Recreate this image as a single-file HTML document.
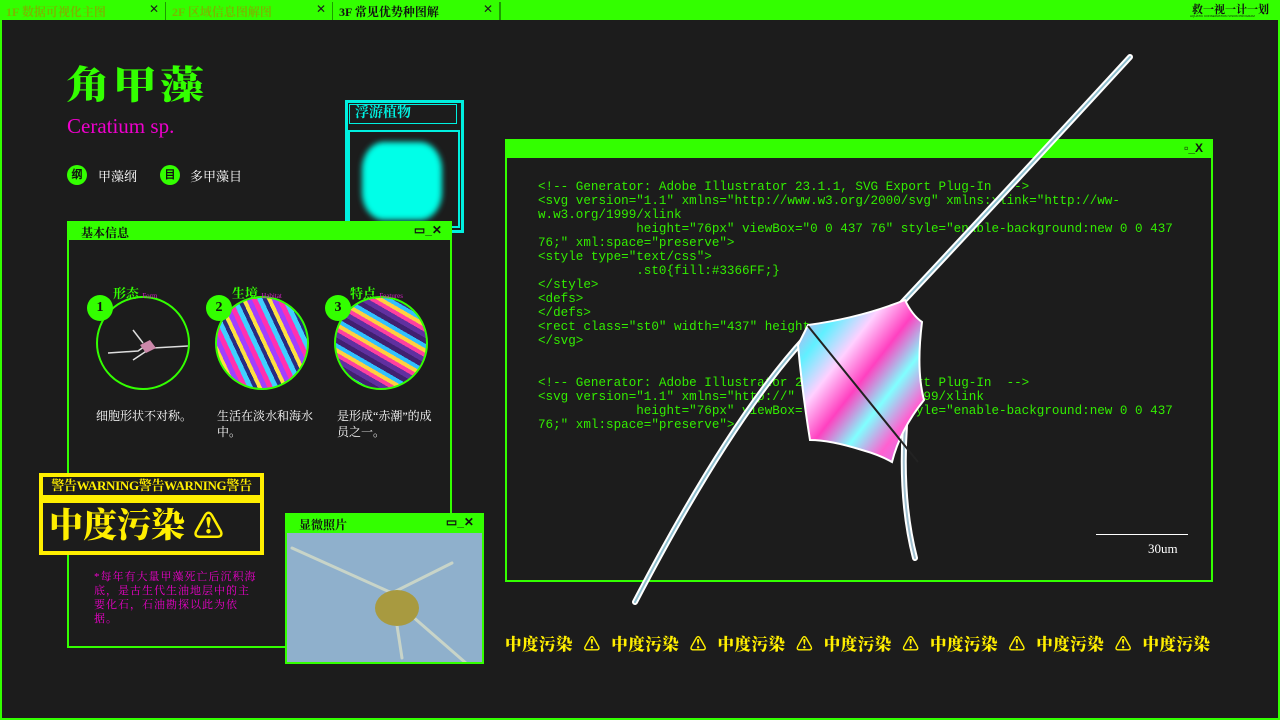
<!DOCTYPE html>
<html><head><meta charset="utf-8"><style>
*{margin:0;padding:0;box-sizing:border-box}
body{width:1280px;height:720px;background:#1c1c1c;position:relative;overflow:hidden;font-family:"Liberation Serif","Noto Serif CJK SC",serif;color:#fff}
.abs{position:absolute}
.frame{left:0;top:0;width:1280px;height:720px;border:2px solid #33ff00}
.top{left:0;top:0;width:1280px;height:20px;background:#33ff00}
.tab{top:0;height:20px;font-size:12px;font-weight:bold;padding:3px 0 0 6px;border-right:1px solid #1c9c00;color:#7ab800}
.tab span{position:absolute;right:6px;top:2px;color:#1c1c1c;font-family:"Liberation Sans",sans-serif;font-weight:normal}
.win{border:2px solid #33ff00}
.bar{position:absolute;left:0;top:0;right:0;height:17px;background:#33ff00;color:#111;font-size:12px;font-weight:bold;padding:1px 0 0 12px;font-family:"Liberation Serif","Noto Serif CJK SC",serif}
.ctl{position:absolute;right:8px;top:0;font-family:"Liberation Sans",sans-serif;font-size:12px;color:#111;font-weight:bold}
.code{font-family:"Liberation Mono","DejaVu Sans Mono",monospace;color:#33ee00;font-size:12.6px;line-height:14px;white-space:pre}
.circ{border:2px solid #33ff00;border-radius:50%;width:94px;height:94px;overflow:hidden}
.num{width:26px;height:26px;border-radius:50%;background:#33ff00;color:#111;font-weight:bold;font-size:14px;text-align:center;line-height:26px;font-family:"Liberation Serif",serif}
.lab{font-size:13px;font-weight:bold;color:#33ff00}
.lab i{font-size:7px;color:#d020c0;font-style:normal;font-weight:normal}
.desc{font-size:12px;line-height:16px;color:#fff}
</style></head><body>
<div class="abs top"></div>
<div class="abs tab" style="left:0;width:166px">1F 数据可视化主图<span>✕</span></div>
<div class="abs tab" style="left:166px;width:167px">2F 区域信息图解图<span>✕</span></div>
<div class="abs tab" style="left:333px;width:167px;color:#111">3F 常见优势种图解<span>✕</span></div>
<div class="abs" style="left:500px;top:0;width:1px;height:20px;background:#1c9c00"></div>
<div class="abs" style="left:1192px;top:1px;font-size:11px;color:#111;font-weight:bold;letter-spacing:0">救一视一计一划</div>
<div class="abs" style="left:1190px;top:14px;font-size:3px;color:#111;font-family:'Liberation Sans',sans-serif">AQUATIC CONSERVATION VISION PROGRAM</div>
<div class="abs frame"></div>

<div class="abs" style="left:66px;top:66px;font-size:44px;font-weight:900;color:#33ff00;letter-spacing:3px;line-height:46px;transform:scaleY(.88);transform-origin:0 0">角甲藻</div>
<div class="abs" style="left:67px;top:114px;font-size:21px;color:#ee00cc">Ceratium sp.</div>
<div class="abs num" style="left:67px;top:165px;width:20px;height:20px;line-height:20px;font-size:11px">纲</div>
<div class="abs" style="left:98px;top:166px;font-size:13px">甲藻纲</div>
<div class="abs num" style="left:160px;top:165px;width:20px;height:20px;line-height:20px;font-size:11px">目</div>
<div class="abs" style="left:190px;top:166px;font-size:13px">多甲藻目</div>

<!-- cyan box -->
<div class="abs" style="left:345px;top:100px;width:119px;height:133px;border:3px solid #00f0e0"></div>
<div class="abs" style="left:349px;top:104px;width:108px;height:20px;border:1px solid #00f0e0;background:#1c1c1c;color:#00f0e0;font-weight:bold;font-size:14px;padding:0 0 0 5px;line-height:18px">浮游植物</div>
<div class="abs" style="left:348px;top:130px;width:112px;height:98px;border:2px solid #00f0e0"></div>
<div class="abs" style="left:362px;top:142px;width:80px;height:78px;background:#00ffe8;border-radius:22px/28px;filter:blur(3px)"></div>

<!-- info panel -->
<div class="abs win" style="left:67px;top:221px;width:385px;height:427px"><div class="bar">基本信息<div class="ctl">▭_✕</div></div></div>
<div class="abs circ" style="left:96px;top:296px"><svg width="94" height="94"><path d="M10 55 L40 53 L50 46 L55 50 L90 48" stroke="#ddd" stroke-width="1.5" fill="none"/><path d="M35 32 L45 45 M35 62 L50 52" stroke="#ddd" stroke-width="1.5" fill="none"/><path d="M42 47 L52 42 L58 50 L48 55Z" fill="#c8a"/></svg></div>
<div class="abs circ" style="left:215px;top:296px;background:repeating-linear-gradient(65deg,#ff30b0 0 5px,#40d0ff 5px 10px,#2a2a80 10px 14px,#ffe040 14px 18px,#a040ff 18px 23px)"></div>
<div class="abs circ" style="left:334px;top:296px;background:repeating-linear-gradient(30deg,#6030a0 0 5px,#ff40a0 5px 9px,#ffd040 9px 13px,#30c0ff 13px 17px,#402070 17px 22px)"></div>
<div class="abs num" style="left:87px;top:295px">1</div>
<div class="abs num" style="left:206px;top:295px">2</div>
<div class="abs num" style="left:325px;top:295px">3</div>
<div class="abs lab" style="left:113px;top:283px">形态 <i>Form</i></div>
<div class="abs lab" style="left:232px;top:283px">生境 <i>Habitat</i></div>
<div class="abs lab" style="left:350px;top:283px">特点 <i>Features</i></div>
<div class="abs desc" style="left:96px;top:408px">细胞形状不对称。</div>
<div class="abs desc" style="left:217px;top:408px;width:100px">生活在淡水和海水中。</div>
<div class="abs desc" style="left:337px;top:408px;width:100px">是形成“赤潮”的成员之一。</div>
<div class="abs" style="left:94px;top:570px;width:165px;font-size:11px;line-height:14px;color:#ee00cc;letter-spacing:1px">*每年有大量甲藻死亡后沉积海底，是古生代生油地层中的主要化石，石油勘探以此为依据。</div>

<!-- warning -->
<div class="abs" style="left:39px;top:473px;width:225px;height:82px;background:#ffee00"></div>
<div class="abs" style="left:43px;top:477px;width:217px;height:18px;background:#1c1c1c;color:#ffee00;font-size:13px;font-weight:bold;text-align:center;line-height:18px;white-space:nowrap;letter-spacing:-0.3px">警告WARNING警告WARNING警告</div>
<div class="abs" style="left:43px;top:503px;width:217px;height:48px;background:#1c1c1c;color:#ffee00;font-size:34px;font-weight:900;line-height:48px;padding-left:6px;white-space:nowrap">中度污染 <span style="font-size:30px">⚠</span></div>

<!-- micro photo -->
<div class="abs win" style="left:285px;top:513px;width:199px;height:151px;background:#8fb0cc;overflow:hidden">
<svg class="abs" style="left:0;top:18px" width="199" height="131"><g stroke="#c8d4c8" stroke-width="3" fill="none" stroke-linecap="round"><path d="M5 15 L105 60 L165 30"/><path d="M105 60 L115 125"/><path d="M110 70 L180 131"/></g><ellipse cx="110" cy="75" rx="22" ry="18" fill="#a89a40"/></svg>
<div class="bar" style="height:18px">显微照片<div class="ctl">▭_✕</div></div>
</div>

<!-- code panel -->
<div class="abs win" style="left:505px;top:139px;width:708px;height:443px"><div class="bar"><div class="ctl">▫_X</div></div></div>
<div class="abs code" style="left:538px;top:180px">&lt;!-- Generator: Adobe Illustrator 23.1.1, SVG Export Plug-In  --&gt;
&lt;svg version="1.1" xmlns="http://www.w3.org/2000/svg" xmlns:xlink="http://ww-
w.w3.org/1999/xlink
             height="76px" viewBox="0 0 437 76" style="enable-background:new 0 0 437
76;" xml:space="preserve"&gt;
&lt;style type="text/css"&gt;
             .st0{fill:#3366FF;}
&lt;/style&gt;
&lt;defs&gt;
&lt;/defs&gt;
&lt;rect class="st0" width="437" height
&lt;/svg&gt;


&lt;!-- Generator: Adobe Illustrator 23.1.1, SVG Export Plug-In  --&gt;
&lt;svg version="1.1" xmlns="http://" ://www.w3.org/1999/xlink
             height="76px" viewBox="0 0 437 76" style="enable-background:new 0 0 437
76;" xml:space="preserve"&gt;</div>
<div class="abs" style="left:1096px;top:534px;width:92px;height:1px;background:#fff"></div>
<div class="abs" style="left:1148px;top:541px;font-size:13px">30um</div>

<!-- ceratium -->
<svg class="abs" style="left:0;top:0" width="1280" height="720">
<defs><linearGradient id="ir" x1="0" y1="0" x2="1" y2="1"><stop offset="0" stop-color="#ff80e0"/><stop offset=".2" stop-color="#60f0ff"/><stop offset=".35" stop-color="#ffd0ff"/><stop offset=".5" stop-color="#ff40c0"/><stop offset=".65" stop-color="#80ffff"/><stop offset=".8" stop-color="#ff60d0"/><stop offset="1" stop-color="#c080ff"/></linearGradient></defs>
<g fill="none" stroke-linecap="round">
<path d="M900 305 Q980 220 1130 57" stroke="#fff" stroke-width="6"/>
<path d="M900 305 Q980 220 1130 57" stroke="#90c0d0" stroke-width="2"/>
<path d="M805 338 Q730 420 635 602" stroke="#fff" stroke-width="6"/>
<path d="M805 338 Q730 420 635 602" stroke="#90c0d0" stroke-width="2"/>
<path d="M905 425 Q900 500 915 558" stroke="#fff" stroke-width="6"/>
<path d="M905 425 Q900 500 915 558" stroke="#a0c0d0" stroke-width="2"/>
</g>
<path d="M808 325 Q860 318 905 300 Q912 315 922 322 Q916 370 924 400 Q900 430 892 462 Q880 455 862 450 Q830 440 810 440 Q802 390 798 345 Z" fill="url(#ir)" stroke="#fff" stroke-width="2"/>
<path d="M808 326 L918 462" stroke="#222" stroke-width="2"/>
</svg>

<div class="abs" style="left:505px;top:631px;font-size:16.5px;font-weight:900;color:#ffee00;white-space:nowrap;letter-spacing:0.5px;word-spacing:6px">中度污染 ⚠ 中度污染 ⚠ 中度污染 ⚠ 中度污染 ⚠ 中度污染 ⚠ 中度污染 ⚠ 中度污染</div>
</body></html>
